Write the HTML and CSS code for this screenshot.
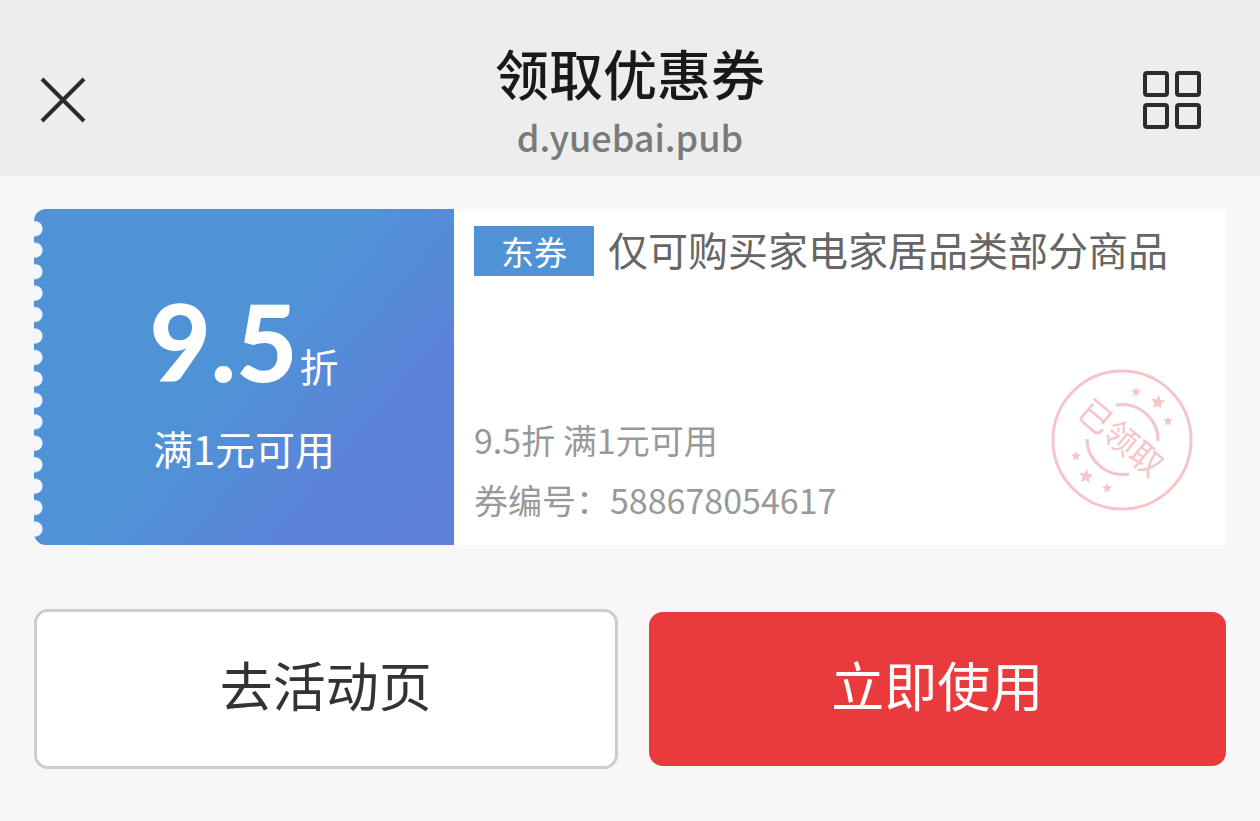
FILE: index.html
```html
<!DOCTYPE html>
<html lang="zh-CN">
<head>
<meta charset="utf-8">
<meta name="viewport" content="width=device-width, initial-scale=1">
<title>领取优惠券</title>
<link rel="stylesheet" href="styles.css">
</head>
<body>
<header class="topbar">
  <button class="icon-button" type="button" aria-label="关闭">
    <svg width="46" height="46" viewBox="0 0 46 46" fill="none" stroke="#2c2c2c" stroke-width="4"><path d="M2 2 44 44M44 2 2 44"/></svg>
  </button>
  <div class="heading">
    <h1 class="title">领取优惠券</h1>
    <p class="domain">d.yuebai.pub</p>
  </div>
  <button class="icon-button icon-button-end" type="button" aria-label="更多">
    <svg width="58" height="58" viewBox="0 0 58 58" fill="none" stroke="#2c2c2c" stroke-width="4"><rect x="2" y="2" width="22" height="22" rx="2"/><rect x="34" y="2" width="22" height="22" rx="2"/><rect x="2" y="34" width="22" height="22" rx="2"/><rect x="34" y="34" width="22" height="22" rx="2"/></svg>
  </button>
</header>
<main class="content">
  <section class="coupon">
    <div class="value">
      <p class="discount"><strong class="number">9.5</strong><span class="unit">折</span></p>
      <p class="condition">满1元可用</p>
    </div>
    <div class="details">
      <div class="scope">
        <span class="tag">东券</span>
        <h2 class="scope-text">仅可购买家电家居品类部分商品</h2>
      </div>
      <div class="meta">
        <p>9.5折 满1元可用</p>
        <p>券编号：588678054617</p>
      </div>
      <svg class="stamp" width="142" height="142" viewBox="0 0 142 142" role="img" aria-label="已领取">
        <defs><path id="star" d="M0-7 2-2.500 7-2 3.300 1.500 4.300 6.300 0 4-4.300 6.300-3.300 1.500-7-2-2-2.500Z"/></defs>
        <g fill="none" stroke="#f5c6c8" stroke-width="3">
          <circle cx="71" cy="71" r="69"/>
          <path d="M65 36A36 36 0 0 1 107 72M36 70A36 36 0 0 0 78 105"/>
        </g>
        <g fill="#f5c6c8">
          <use href="#star" transform="translate(107 33) rotate(8)"/>
          <use href="#star" transform="translate(85 23) scale(.7)"/>
          <use href="#star" transform="translate(117 52) scale(.7)"/>
          <use href="#star" transform="translate(35 107) rotate(8)"/>
          <use href="#star" transform="translate(25 87) scale(.7)"/>
          <use href="#star" transform="translate(56 119) scale(.7)"/>
          <text class="stamp-text" x="69" y="82" text-anchor="middle" transform="rotate(40 71 71)">已领取</text>
        </g>
      </svg>
    </div>
  </section>
  <nav class="actions">
    <button class="action action-outline" type="button">去活动页</button>
    <button class="action action-primary" type="button">立即使用</button>
  </nav>
</main>
</body>
</html>
```
FILE: styles.css
```css
* {
  margin: 0;
}

body {
  background: #f7f7f7;
  color: #333;
  font-family: "Noto Sans CJK SC", sans-serif;
}

button {
  padding: 0;
  border: 0;
  background: none;
  font: inherit;
  color: inherit;
  cursor: pointer;
}

.topbar {
  display: grid;
  grid-template-columns: 1fr auto 1fr;
  align-items: center;
  padding: 40px 59px 16px 40px;
  background: #ededed;
}

.icon-button {
  display: flex;
  justify-self: start;
}

.icon-button-end {
  justify-self: end;
}

.heading {
  margin-left: 19px;
  text-align: center;
}

.title {
  margin-bottom: 6px;
  color: #191919;
  font-size: 54px;
  font-weight: 500;
  line-height: 66px;
}

.domain {
  color: #7a7a7a;
  font-size: 36px;
  font-weight: 500;
  line-height: 48px;
}

.content {
  padding: 33px 34px;
}

.coupon {
  display: flex;
  min-height: 336px;
  background: #fff;
  border-radius: 12px 0 0 12px;
}

.value {
  position: relative;
  display: flex;
  flex: 0 0 420px;
  flex-direction: column;
  align-items: center;
  justify-content: center;
  background: linear-gradient(130deg, #4f93d6 46%, #5d82da 78%, #5f7fda);
  border-radius: 12px 0 0 12px;
  color: #fff;
}

/* Perforated edge */
.value::before {
  content: "";
  position: absolute;
  top: 9px;
  bottom: 5px;
  left: 0;
  width: 9px;
  background: radial-gradient(circle at 1px 50%, #f3f7fd 7px, transparent 8px) 0 0 / 9px 21px;
  background-repeat: no-repeat round;
}

.discount {
  display: flex;
  align-items: baseline;
  gap: 2px;
  line-height: 118px;
}

.number {
  font-family: Lato, sans-serif;
  font-size: 106px;
  font-weight: 900;
}

.unit {
  font-size: 39px;
}

.condition {
  font-size: 40px;
  line-height: 48px;
}

.details {
  position: relative;
  display: flex;
  flex: 1;
  flex-direction: column;
  justify-content: space-between;
  min-width: 0;
  padding: 17px 20px 15px;
}

.scope {
  display: flex;
  align-items: flex-start;
  gap: 14px;
}

.tag {
  flex: none;
  padding: 0 27px;
  background: #4f93d6;
  color: #fff;
  font-size: 33px;
  line-height: 50px;
}

.scope-text {
  color: #666;
  font-size: 40px;
  font-weight: 400;
  line-height: 46px;
}

.meta {
  color: #999;
  font-size: 34px;
  line-height: 60px;
}

.stamp {
  position: absolute;
  right: 33px;
  bottom: 34px;
}

.stamp-text {
  font-size: 33px;
}

.actions {
  display: flex;
  align-items: center;
  gap: 31px;
  margin-top: 64px;
}

.action {
  box-sizing: content-box;
  flex: 1 1 0;
  padding: 32px 0 42px;
  border-radius: 14px;
  font-size: 53px;
  line-height: 80px;
}

.action-outline {
  border: 3px solid #ccc;
  background: #fff;
}

.action-primary {
  background: #e93b3d;
  color: #fff;
}
```
